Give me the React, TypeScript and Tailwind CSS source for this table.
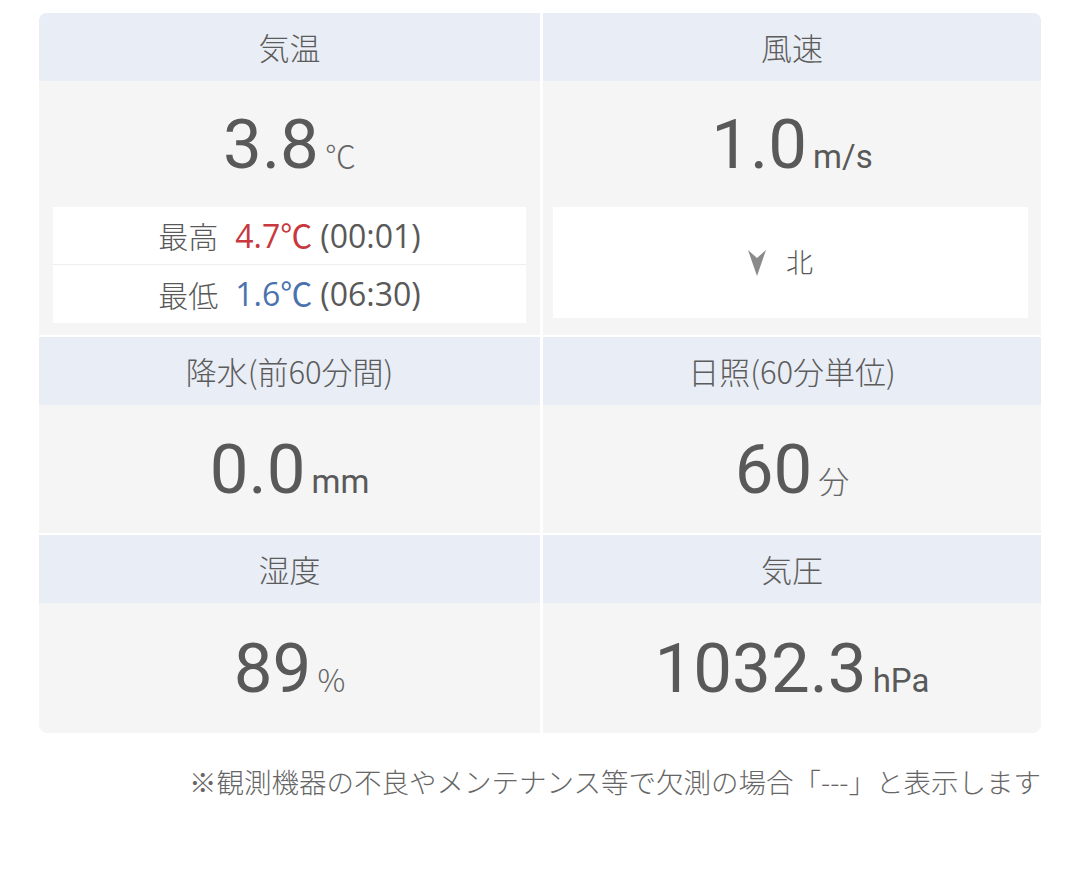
import React from "react";

const cjk = { fontFamily: '"Noto Sans CJK JP", "Noto Sans", sans-serif' };
const num = { fontFamily: 'Roboto, "Noto Sans", sans-serif' };
const mixed = { fontFamily: '"Open Sans", "Noto Sans CJK JP", sans-serif' };

function Header({ label }: { label: string }) {
    return (
        <div className="h-[68px] bg-[#e9edf5] flex items-center justify-center text-[31px] font-light text-[#5c5c5c]" style={cjk}>
            {label}
        </div>
    );
}

function BigValue({ value, unit, unitCjk }: { value: string; unit: string; unitCjk?: boolean }) {
    return (
        <div className="flex items-baseline justify-center text-[#595959]">
            <span className="text-[69px] leading-none" style={num}>{value}</span>
            <span className={unitCjk ? "text-[31px] ml-[6px] leading-none font-light text-[#666]" : "text-[33px] ml-[6px] leading-none"} style={unitCjk ? cjk : num}>
                {unit}
            </span>
        </div>
    );
}

function WindArrow() {
    return (
        <svg width="18" height="26" viewBox="0 0 18 26" className="block">
            <path d="M0 0 L9 8 L18 0 L9 26 Z" fill="#8a8a8a" />
        </svg>
    );
}

export default function App() {
    return (
        <div className="w-[1080px] h-[880px] bg-white pt-[13px] pl-[39px]">
            <div className="w-[1002px] rounded-lg overflow-hidden flex flex-col gap-[2px]">
                {/* 気温 / 風速 */}
                <div className="grid grid-cols-[501px_498px] gap-[3px]">
                    <div className="flex flex-col bg-[#f5f5f5]">
                        <Header label="気温" />
                        <div className="h-[126px] flex items-center justify-center">
                            <BigValue value="3.8" unit="℃" unitCjk />
                        </div>
                        <div className="mx-[14px] mb-[12px] bg-white flex flex-col text-[30px] text-[#595959]" style={mixed}>
                            <div className="h-[58px] flex items-center justify-center border-b border-[#eeeeee]">
                                <span className="font-light" style={cjk}>最高</span>
                                <span className="ml-[17px] text-[32px] text-[#c8383d]">4.7℃</span>
                                <span className="ml-[8px] text-[32px]">(00:01)</span>
                            </div>
                            <div className="h-[58px] flex items-center justify-center">
                                <span className="font-light" style={cjk}>最低</span>
                                <span className="ml-[17px] text-[32px] text-[#4a72ae]">1.6℃</span>
                                <span className="ml-[8px] text-[32px]">(06:30)</span>
                            </div>
                        </div>
                    </div>
                    <div className="flex flex-col bg-[#f5f5f5]">
                        <Header label="風速" />
                        <div className="h-[126px] flex items-center justify-center">
                            <BigValue value="1.0" unit="m/s" />
                        </div>
                        <div className="ml-[10px] mr-[13px] pr-[20px] h-[111px] bg-white flex items-center justify-center gap-[20px]">
                            <WindArrow />
                            <span className="text-[27px] font-light text-[#595959]" style={cjk}>北</span>
                        </div>
                    </div>
                </div>

                {/* 降水 / 日照 */}
                <div className="grid grid-cols-[501px_498px] gap-[3px]">
                    <div className="flex flex-col bg-[#f5f5f5]">
                        <Header label="降水(前60分間)" />
                        <div className="h-[128px] flex items-center justify-center">
                            <BigValue value="0.0" unit="mm" />
                        </div>
                    </div>
                    <div className="flex flex-col bg-[#f5f5f5]">
                        <Header label="日照(60分単位)" />
                        <div className="h-[128px] flex items-center justify-center">
                            <BigValue value="60" unit="分" unitCjk />
                        </div>
                    </div>
                </div>

                {/* 湿度 / 気圧 */}
                <div className="grid grid-cols-[501px_498px] gap-[3px]">
                    <div className="flex flex-col bg-[#f5f5f5]">
                        <Header label="湿度" />
                        <div className="h-[130px] flex items-center justify-center">
                            <BigValue value="89" unit="%" unitCjk />
                        </div>
                    </div>
                    <div className="flex flex-col bg-[#f5f5f5]">
                        <Header label="気圧" />
                        <div className="h-[130px] flex items-center justify-center">
                            <BigValue value="1032.3" unit="hPa" />
                        </div>
                    </div>
                </div>
            </div>

            <p className="w-[1002px] mt-[28px] text-right text-[27.5px] font-light text-[#666666]" style={cjk}>
                ※観測機器の不良やメンテナンス等で欠測の場合「---」と表示します
            </p>
        </div>
    );
}
